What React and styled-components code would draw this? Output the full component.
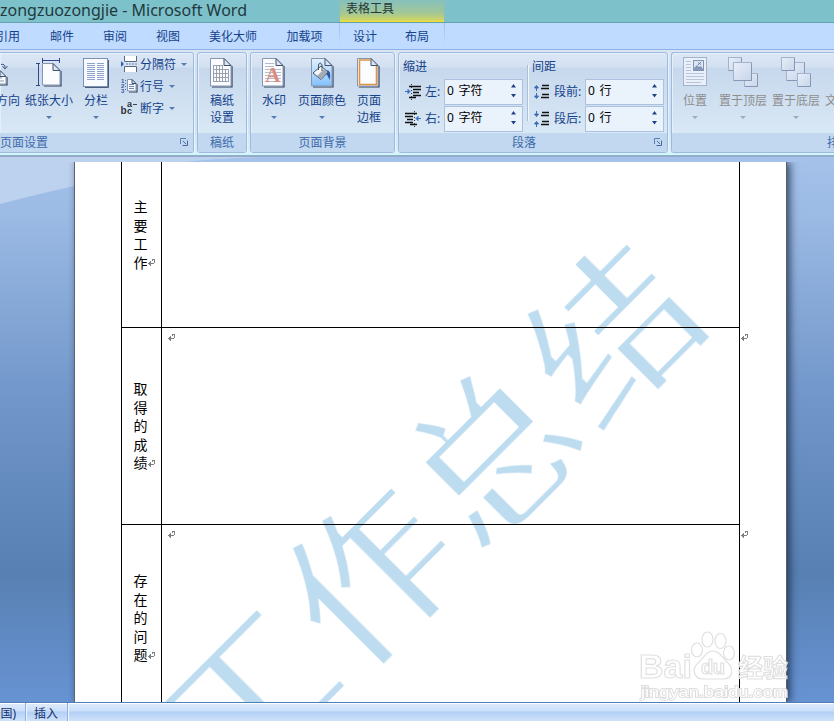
import React from 'react';
import styled, { createGlobalStyle, css } from 'styled-components';

const GlobalStyle = createGlobalStyle`
  * {
    box-sizing: border-box;
  }
  body {
    margin: 0;
    overflow: hidden;
    font-family: 'Noto Sans', 'Noto Sans CJK SC', sans-serif;
    font-size: 12px;
    color: #15428b;
  }
  svg {
    display: block;
  }
`;

const Window = styled.div`
  display: flex;
  flex-direction: column;
  width: 834px;
  height: 721px;
  overflow: hidden;
`;
const TitleBar = styled.header`
  display: flex;
  height: 23px;
  background: #7dc1cb;
  border-bottom: 1px solid #66a3af;
`;
const Title = styled.div`
  width: 339px;
  font-family: 'Noto Sans', sans-serif;
  font-size: 16px;
  line-height: 21px;
  color: #22393e;
  white-space: nowrap;
`;
const ContextTitle = styled.div`
  width: 106px;
  height: 22px;
  padding-left: 6px;
  line-height: 17px;
  color: #24393b;
  background: linear-gradient(#86c1bc, #a3c796 60%, #cfd467 90%, #f0e02c);
  border-left: 1px solid #8fbfb4;
  border-right: 1px solid #8fbfb4;
`;
const Tabs = styled.nav`
  display: flex;
  height: 27px;
  background: #bfdbff;
  border-bottom: 1px solid #8db2e3;
`;
const Tab = styled.div`
  display: flex;
  justify-content: ${(props) => props.$align || 'center'};
  width: ${(props) => props.$width}px;
  padding-left: ${(props) => props.$left || 0}px;
  line-height: 27px;
  white-space: nowrap;
  ${(props) =>
    props.$edge &&
    css`
      border-right: 1px solid;
      border-image: linear-gradient(#9fc0dd, #bfdbff 85%) 1;
    `}
`;
const Ribbon = styled.section`
  display: flex;
  gap: 3px;
  height: 107px;
  padding-top: 2px;
  background: linear-gradient(#dbe6f4, #d2e0f2 20%, #cfe1f5 70%, #d9f1fb 98%);
  border-bottom: 2px solid #96abc8;
  box-shadow: inset 0 -1px #c9fbff;
`;
const Group = styled.div`
  display: flex;
  flex-direction: column;
  flex: none;
  width: ${(props) => props.$width}px;
  height: 101px;
  overflow: hidden;
  border: 1px solid #9ebbdb;
  border-radius: 3px;
  box-shadow: inset 1px 1px #e6eef8, 1px 0 #e9f3fc;
  background: linear-gradient(
    #dce7f5 0,
    #d3e0f1 14px,
    #c7d8ed 15px,
    #d8e8f5 80px
  );
  ${(props) => props.$cut === 'left' && 'border-left: 0; border-radius: 0 3px 3px 0;'}
  ${(props) => props.$cut === 'right' && 'border-right: 0; border-radius: 3px 0 0 3px;'}
`;
const GroupBody = styled.div`
  display: flex;
  height: 80px;
  padding: 4px 0 0 ${(props) => props.$left}px;
`;
const GroupTitle = styled.div`
  display: flex;
  align-items: center;
  height: 19px;
  padding: 0 ${(props) => props.$right || 0}px 2px ${(props) => props.$left || 0}px;
  color: #3e6aaa;
  background: #c1d8f0;
  white-space: nowrap;
`;
const TitleText = styled.span`
  flex: 1;
  padding-right: ${(props) => props.$pad || 0}px;
  text-align: ${(props) => props.$align || 'center'};
`;
const BigButton = styled.div`
  display: flex;
  flex-direction: column;
  flex: none;
  align-items: center;
  width: ${(props) => props.$width}px;
  margin-left: ${(props) => props.$gap || 0}px;
  line-height: 17px;
  white-space: nowrap;
  color: ${(props) => (props.$disabled ? '#8d8d8d' : '#15428b')};
`;
const IconBox = styled.div`
  display: flex;
  justify-content: center;
  height: 35px;
`;
const Caret = styled.i`
  width: 0;
  height: 0;
  margin: ${(props) => (props.$inline ? '1px 0 0 5px' : '7px 0 0')};
  border: 3px solid transparent;
  border-top-color: ${(props) => (props.$disabled ? '#a5a9b0' : '#567db1')};
  border-bottom: 0;
`;
const SmallList = styled.div`
  display: flex;
  flex-direction: column;
  margin-left: 7px;
`;
const SmallButton = styled.div`
  display: flex;
  align-items: center;
  height: 22px;
  margin-top: ${(props) => props.$top || 0}px;
  white-space: nowrap;
`;
const SmallIcon = styled.div`
  width: 19px;
`;
const Column = styled.div`
  width: ${(props) => props.$width}px;
  flex: none;
`;
const ColumnTitle = styled.div`
  height: 21px;
  line-height: 19px;
`;
const Field = styled.div`
  display: flex;
  align-items: center;
  height: 27px;
`;
const FieldIcon = styled.div`
  width: ${(props) => props.$width}px;
  padding-left: 2px;
`;
const FieldLabel = styled.span`
  width: ${(props) => props.$width}px;
  padding-bottom: 1px;
  white-space: nowrap;
`;
const Spinner = styled.div`
  display: flex;
  align-items: center;
  justify-content: space-between;
  width: 79px;
  height: 26px;
  padding: 0 5px 3px 2px;
  color: #000;
  word-spacing: 1.5px;
  background: #eaf2fb;
  border: 1px solid #abc1de;
`;
const Divider = styled.div`
  width: 2px;
  height: 56px;
  margin: 8px 3px 0 4px;
  background: #f0f6fc;
  border-left: 1px solid #a9bfdc;
`;
const Workspace = styled.main`
  display: flex;
  position: relative;
  height: 545px;
  padding: 5px 0 0 74px;
  overflow: hidden;
  background: linear-gradient(
    #a4c2ea 0,
    #9bbae4 60px,
    #7398cb 230px,
    #5880b2 415px,
    #6793d3 545px
  );
`;
const Swoosh = styled.svg`
  position: absolute;
  left: 0;
  top: 0;
`;
const Page = styled.article`
  position: relative;
  width: 713px;
  height: 540px;
  overflow: hidden;
  background: #fff;
  border-left: 1px solid #5c6470;
  border-right: 1px solid #56606c;
`;
const PageShadow = styled.div`
  position: relative;
  display: flex;
  clip-path: inset(0 -14px 0 -6px);
  box-shadow: 3px 0 8px rgba(20, 35, 60, 0.75);
`;
const Watermark = styled.svg`
  position: absolute;
  left: 0;
  top: 0;
  font-family: 'Noto Sans CJK SC', sans-serif;
`;
const Table = styled.div`
  position: relative;
  display: grid;
  grid-template-columns: 41px 578px 40px;
  grid-template-rows: 165px 197px 178px;
  margin-left: 46px;
`;
const HeadCell = styled.div`
  padding-top: ${(props) => props.$top}px;
  padding-left: 11.5px;
  border-left: 1px solid #000;
  border-right: 1px solid #000;
  border-top: ${(props) => (props.$line ? '1px solid #000' : '0')};
  font-family: 'Noto Sans CJK SC', sans-serif;
  font-size: 14px;
  line-height: 18.6px;
  color: #000;
`;
const Char = styled.div`
  display: flex;
  align-items: center;
  height: 18.6px;
`;
const BodyCell = styled.div`
  padding: 5px 0 0 6px;
  border-right: 1px solid #000;
  border-top: ${(props) => (props.$line ? '1px solid #000' : '0')};
`;
const OutCell = styled.div`
  padding: 6px 0 0 1px;
`;
const SiteMark = styled.svg`
  position: absolute;
  left: 636px;
  top: 468px;
`;
const StatusBar = styled.footer`
  display: flex;
  height: 19px;
  border-top: 1px solid #4f7db5;
  box-shadow: inset 0 1px #fff;
  background: linear-gradient(#dfebfc 0, #cbdff9 8px, #b2cff5 9px, #d3e4fb 19px);
`;
const StatusItem = styled.div`
  display: flex;
  justify-content: flex-end;
  width: ${(props) => props.$width}px;
  padding-right: 9px;
  line-height: 21px;
  border-right: 1px solid #8fb0dc;
  box-shadow: 1px 0 #eef5ff;
  white-space: nowrap;
  color: #15306b;
`;

function Sheet({ x = 0, y = 0, w = 21, h = 28, fill = '#fbfcff', fold = 7 }) {
  return (
    <g transform={`translate(${x} ${y})`}>
      <path d={`M2 ${h + 1}H${w + 1}V${fold + 1}`} fill="none" stroke="#30405c" strokeWidth="1.2" />
      <path
        d={`M.5 .5H${w - fold}L${w} ${fold + 0.5}V${h}H.5Z`}
        fill={fill}
        stroke="#8795ae"
      />
      <path d={`M${w - fold} .5V${fold + 0.5}H${w}Z`} fill="#dce4f2" stroke="#41516d" />
    </g>
  );
}

function DirectionIcon() {
  return (
    <svg width="34" height="32">
      <Sheet x={13} y={13} w={14} h={14} fold={6} />
      <path d="M16 21h7M16 24h9" stroke="#8797b4" />
      <path d="M22 7.500q4 -1 4 3M23.500 9l2.500 3 2.500-3" fill="none" stroke="#39527f" />
    </svg>
  );
}

function PaperSizeIcon() {
  return (
    <svg width="26" height="32">
      <path
        d="M6 3.500H24M6.500 1V6M23.500 1V6M2.500 6V28M0 6.500H4M0 28.500H4"
        stroke="#33488c"
        fill="none"
      />
      <Sheet x={6} y={6} w={18} h={22} fold={7} />
    </svg>
  );
}

function ColumnsIcon() {
  return (
    <svg width="26" height="32">
      <path d="M2 30.500H25.500V3" stroke="#4b5d7d" fill="none" />
      <rect x=".5" y="1.500" width="24" height="28" fill="#f8fbff" stroke="#7c90b3" />
      {Array.from({ length: 9 }, (_, i) => (
        <path key={i} d={`M4 ${6.5 + i * 2}H12M14 ${6.5 + i * 2}H21`} stroke="#8fa3ca" />
      ))}
    </svg>
  );
}

function BreaksIcon() {
  return (
    <svg width="17" height="16">
      <path d="M3.500 0V5.500H15.500V0M3.500 16V10.500H15.500V16" fill="#fff" stroke="#586a88" />
      <path d="M5 8H17" stroke="#7383a0" strokeDasharray="2 1" />
      <path d="M0 5L3 8 0 11Z" fill="#2f5db0" />
    </svg>
  );
}

function LineNumbersIcon() {
  return (
    <svg width="17" height="16">
      <g fill="#3459a0" fontSize="6" fontFamily="Liberation Sans, sans-serif" fontWeight="bold">
        <text x="0" y="5">1</text>
        <text x="0" y="10">2</text>
        <text x="0" y="15">3</text>
      </g>
      <path d="M4.500 2v11" stroke="#5470a0" strokeDasharray="1 2" />
      <Sheet x={6} y={1} w={9} h={12} fold={4} />
      <path d="M8 6.500h5M8 8.500h5M8 10.500h5" stroke="#7189b5" />
    </svg>
  );
}

function HyphenIcon() {
  return (
    <svg width="17" height="16" fill="#333" fontFamily="Liberation Sans, sans-serif" fontWeight="bold">
      <text x="-0.500" y="14" fontSize="10">b</text>
      <text x="6" y="14" fontSize="9">c</text>
      <text x="6" y="7" fontSize="9">a</text>
      <path d="M12 4.500h4" stroke="#444" />
    </svg>
  );
}

function GridPaperIcon() {
  return (
    <svg width="24" height="32">
      <Sheet x={0} y={1} />
      <path
        d="M3 8.500H13M3 12.500H19M3 16.500H19M3 20.500H19M3 24.500H19M3.500 8V25M6.500 8V25M9.500 8V25M12.500 8V25M15.500 12V25M18.500 12V25"
        stroke="#9aa1ac"
        fill="none"
      />
    </svg>
  );
}

function WatermarkIcon() {
  return (
    <svg width="24" height="32">
      <Sheet x={0} y={1} />
      <path
        d="M3 6.500H12M3 9.500H12M3 12.500H19M3 15.500H19M3 18.500H19M3 21.500H19M3 24.500H19"
        stroke="#b6bdca"
      />
      <text
        x="10.800"
        y="25"
        fontSize="21"
        textAnchor="middle"
        fontFamily="Liberation Serif, serif"
        fontWeight="bold"
        fill="#dd8a82"
      >
        A
      </text>
    </svg>
  );
}

function PageColorIcon() {
  return (
    <svg width="24" height="32">
      <defs>
        <linearGradient id="pageBlue" x1="0" y1="0" x2="0" y2="1">
          <stop offset="0" stopColor="#e2f1ff" />
          <stop offset="1" stopColor="#82c1fb" />
        </linearGradient>
      </defs>
      <Sheet x={1} y={1} fill="url(#pageBlue)" />
      <path d="M16 13q6 0 3.500 10q-2-6-5-7Z" fill="#2456a8" />
      <path d="M3 16L11 9 18 15 11 22.500Z" fill="#f4f6f9" stroke="#4c5563" />
      <path d="M11 22L17.500 15 14 12 7 19Z" fill="#a3abb6" />
      <path d="M8.500 13V8q1.500-4 3.500 0v6" fill="none" stroke="#4b5360" />
    </svg>
  );
}

function PageBorderIcon() {
  return (
    <svg width="24" height="32">
      <Sheet x={0} y={1} />
      <path d="M14 3H2.500V27.500H19.500V9" fill="none" stroke="#dc9448" strokeWidth="1.600" />
    </svg>
  );
}

function PositionIcon() {
  return (
    <svg width="24" height="32">
      <rect x=".5" y=".5" width="23" height="28" fill="#e9f0fa" stroke="#a2b2cd" />
      <path
        d="M3 4.500H8M3 7.500H8M3 10.500H8M3 13.500H8M3 16.500H21M3 19.500H21M3 22.500H21M3 25.500H18"
        stroke="#b8c4d9"
      />
      <rect x="10.500" y="3.500" width="10" height="10" fill="#dbe5f3" stroke="#8293b3" />
      <path d="M11 13V11l3-3 2 2 2-1 2 3v1Z" fill="#8799b8" />
      <path d="M18 5l-3 3M15 5.500l3 2" fill="none" stroke="#7184a6" />
    </svg>
  );
}

function Tile({ x, y, s }) {
  return (
    <g>
      <rect x={x + 0.5} y={y + 0.5} width={s} height={s} fill="url(#tile)" stroke="#a4b3cc" />
      <path d={`M${x + 1} ${y + s + 0.5}H${x + s + 0.5}V${y + 1}`} fill="none" stroke="#8797b5" />
    </g>
  );
}

function StackIcon({ tiles }) {
  return (
    <svg width="31" height="32">
      <defs>
        <linearGradient id="tile" x1="0" y1="0" x2="1" y2="1">
          <stop offset="0" stopColor="#e8eff9" />
          <stop offset="1" stopColor="#c7d5ea" />
        </linearGradient>
      </defs>
      {tiles.map(([x, y, s]) => (
        <Tile key={`${x}-${y}`} x={x} y={y} s={s} />
      ))}
    </svg>
  );
}

function IndentIcon({ right }) {
  return (
    <svg width="17" height="16">
      <g transform={right ? 'translate(16 0) scale(-1 1)' : undefined}>
        <path
          d="M4 2.500H16M8 5.500H16M8 8.500H14M8 11.500H16M4 13.500H11"
          stroke="#111"
          strokeWidth="1.500"
        />
        <path d="M6.500 0V16" stroke="#333" strokeDasharray="1 2" />
        <path d="M0 7.500H3M3 5.500L5 7.500 3 9.500Z" fill="#3a6fc4" stroke="#3a6fc4" />
      </g>
    </svg>
  );
}

function SpacingIcon({ after }) {
  const up = 'M2.500 7V3M.5 4L2.500 1.500 4.500 4Z';
  const down = 'M2.500 0V4M.5 3L2.500 5.500 4.500 3Z';
  return (
    <svg width="17" height="16">
      <path d={after ? down : up} fill="#3f6db9" stroke="#3f6db9" />
      <path d={after ? up : down} transform="translate(0 9)" fill="#3f6db9" stroke="#3f6db9" />
      <path
        d="M8 1.500H15M7 4.500H15M8 10.500H15M7 13.500H15"
        stroke="#111"
        strokeWidth="1.400"
      />
    </svg>
  );
}

function SpinArrows() {
  return (
    <svg width="7" height="18" fill="#1d4486">
      <path d="M1 6.500L3.500 3 6 6.500ZM1 13L3.500 16.500 6 13Z" />
    </svg>
  );
}

function Launcher() {
  return (
    <svg width="8" height="8" fill="none" stroke="#5d7fae">
      <path d="M.5 6V.5H6" />
      <path d="M3 3L6 6M7.500 2.500V7.500H2.500" stroke="#47699a" />
    </svg>
  );
}

function ReturnMark() {
  return (
    <svg width="8" height="8" fill="none" stroke="#808080" shapeRendering="crispEdges">
      <path d="M4 1.500H7M6.500 1V5M0 5.500H6M4.500 1V3M1.500 4V7M2.500 3V8" />
    </svg>
  );
}

const tabs = [
  { label: '引用', width: 20, align: 'flex-end' },
  { label: '邮件', width: 84 },
  { label: '审阅', width: 22 },
  { label: '视图', width: 84 },
  { label: '美化大师', width: 46 },
  { label: '加载项', width: 84, left: 14, edge: true },
  { label: '设计', width: 50 },
  { label: '布局', width: 55, edge: true },
];

const rows = [
  { text: '主要工作', top: 35 },
  { text: '取得的成绩', top: 51 },
  { text: '存在的问题', top: 46 },
];

const watermark = [
  { char: '工', x: -316 },
  { char: '作', x: -145 },
  { char: '总', x: 26 },
  { char: '结', x: 197 },
];

function Button({ icon, lines, width, gap, disabled, menu }) {
  return (
    <BigButton $width={width} $gap={gap} $disabled={disabled}>
      <IconBox>{icon}</IconBox>
      {lines.map((line) => (
        <span key={line}>{line}</span>
      ))}
      {menu && <Caret $disabled={disabled} />}
    </BigButton>
  );
}

function NumberField({ icon, label, iconWidth, labelWidth, value }) {
  return (
    <Field>
      <FieldIcon $width={iconWidth}>{icon}</FieldIcon>
      <FieldLabel $width={labelWidth}>{label}</FieldLabel>
      <Spinner>
        {value}
        <SpinArrows />
      </Spinner>
    </Field>
  );
}

function RibbonBar() {
  return (
    <Ribbon>
      <Group $width={194} $cut="left">
        <GroupBody $left={0}>
          <Button icon={<DirectionIcon />} lines={['文字方向']} width={48} gap={-28} />
          <Button icon={<PaperSizeIcon />} lines={['纸张大小']} width={54} gap={2} menu />
          <Button icon={<ColumnsIcon />} lines={['分栏']} width={36} gap={2} menu />
          <SmallList>
            <SmallButton $top={-4}>
              <SmallIcon><BreaksIcon /></SmallIcon>分隔符<Caret $inline />
            </SmallButton>
            <SmallButton>
              <SmallIcon><LineNumbersIcon /></SmallIcon>行号<Caret $inline />
            </SmallButton>
            <SmallButton>
              <SmallIcon><HyphenIcon /></SmallIcon>断字<Caret $inline />
            </SmallButton>
          </SmallList>
        </GroupBody>
        <GroupTitle $right={5}>
          <TitleText $align="left">页面设置</TitleText>
          <Launcher />
        </GroupTitle>
      </Group>

      <Group $width={50}>
        <GroupBody $left={12}>
          <Button icon={<GridPaperIcon />} lines={['稿纸', '设置']} width={24} />
        </GroupBody>
        <GroupTitle><TitleText>稿纸</TitleText></GroupTitle>
      </Group>

      <Group $width={145}>
        <GroupBody $left={11}>
          <Button icon={<WatermarkIcon />} lines={['水印']} width={24} menu />
          <Button icon={<PageColorIcon />} lines={['页面颜色']} width={48} gap={12} menu />
          <Button icon={<PageBorderIcon />} lines={['页面', '边框']} width={24} gap={11} />
        </GroupBody>
        <GroupTitle><TitleText>页面背景</TitleText></GroupTitle>
      </Group>

      <Group $width={270}>
        <GroupBody $left={4}>
          <Column $width={120}>
            <ColumnTitle>缩进</ColumnTitle>
            <NumberField icon={<IndentIcon />} label="左:" iconWidth={22} labelWidth={19} value="0 字符" />
            <NumberField icon={<IndentIcon right />} label="右:" iconWidth={22} labelWidth={19} value="0 字符" />
          </Column>
          <Divider />
          <Column $width={132}>
            <ColumnTitle>间距</ColumnTitle>
            <NumberField icon={<SpacingIcon />} label="段前:" iconWidth={22} labelWidth={31} value="0 行" />
            <NumberField icon={<SpacingIcon after />} label="段后:" iconWidth={22} labelWidth={31} value="0 行" />
          </Column>
        </GroupBody>
        <GroupTitle $right={5}>
          <TitleText $pad={5}>段落</TitleText>
          <Launcher />
        </GroupTitle>
      </Group>

      <Group $width={163} $cut="right">
        <GroupBody $left={11}>
          <Button icon={<PositionIcon />} lines={['位置']} width={24} disabled menu />
          <Button
            icon={<StackIcon tiles={[[0, 0, 13], [16, 16, 13], [5, 5, 18]]} />}
            lines={['置于顶层']}
            width={48}
            gap={12}
            disabled
            menu
          />
          <Button
            icon={<StackIcon tiles={[[5, 5, 18], [0, 0, 13], [16, 16, 13]]} />}
            lines={['置于底层']}
            width={48}
            gap={5}
            disabled
            menu
          />
          <Button icon={null} lines={['文字环绕']} width={48} gap={5} disabled />
        </GroupBody>
        <GroupTitle $left={155}><TitleText $align="left">排列</TitleText></GroupTitle>
      </Group>
    </Ribbon>
  );
}

function BaiduMark() {
  return (
    <SiteMark width="160" height="76" fill="#fff" stroke="#dedede" strokeWidth="1.200">
      <g opacity="0.92" fontFamily="Liberation Sans, Noto Sans CJK SC, sans-serif" fontWeight="bold">
        <text x="3" y="53" fontSize="34" textLength="53">Bai</text>
        <ellipse cx="61" cy="25" rx="5.500" ry="7" />
        <ellipse cx="71.500" cy="14.500" rx="5.500" ry="7.500" />
        <ellipse cx="84.500" cy="16" rx="5.500" ry="7.500" />
        <ellipse cx="93" cy="28" rx="5.500" ry="7" />
        <path d="M77 26C70 26 68 33 62 38C55 44 58 54 67 54H87C97 54 98 44 92 38C86 33 84 26 77 26Z" />
        <text x="65" y="49" fontSize="20" textLength="24">du</text>
        <text x="102" y="52" fontSize="25" textLength="50">经验</text>
        <text
          x="5"
          y="72"
          fontSize="15.500"
          fontWeight="normal"
          textLength="147"
          lengthAdjust="spacingAndGlyphs"
          stroke="#dadada"
          strokeWidth="1.800"
          paintOrder="stroke"
        >
          jingyan.baidu.com
        </text>
      </g>
    </SiteMark>
  );
}

function Document() {
  return (
    <Workspace>
      <Swoosh width="834" height="50">
        <path d="M0 0H260Q130 4 74 29Q30 39 0 47Z" fill="#bdd2ef" />
      </Swoosh>
      <PageShadow>
        <Page>
          <Watermark
            width="711"
            height="540"
            viewBox="75 162 711 540"
            fontSize="165"
            textAnchor="middle"
            fill="#bedcf0"
          >
            <defs>
              {/* thins the horizontal strokes only, for a song-style weight */}
              <filter id="thin" x="-10%" y="-10%" width="120%" height="120%">
                <feMorphology operator="erode" radius="0 3" />
              </filter>
            </defs>
            <g transform="rotate(-45)">
              {watermark.map(({ char, x }) => (
                <text key={char} x={x} y="730" filter="url(#thin)">
                  {char}
                </text>
              ))}
            </g>
          </Watermark>
          <Table>
            {rows.map((row, index) => (
              <React.Fragment key={row.text}>
                <HeadCell $top={row.top} $line={index > 0}>
                  {[...row.text].map((char, i) => (
                    <Char key={i}>
                      {char}
                      {i === row.text.length - 1 && <ReturnMark />}
                    </Char>
                  ))}
                </HeadCell>
                <BodyCell $line={index > 0}>{index > 0 && <ReturnMark />}</BodyCell>
                <OutCell>{index > 0 && <ReturnMark />}</OutCell>
              </React.Fragment>
            ))}
          </Table>
        </Page>
      </PageShadow>
      <BaiduMark />
    </Workspace>
  );
}

function App() {
  return (
    <>
      <GlobalStyle />
      <Window>
        <TitleBar>
          <Title>zongzuozongjie - Microsoft Word</Title>
          <ContextTitle>表格工具</ContextTitle>
        </TitleBar>
        <Tabs>
          {tabs.map((tab) => (
            <Tab
              key={tab.label}
              $width={tab.width}
              $left={tab.left}
              $align={tab.align}
              $edge={tab.edge}
            >
              {tab.label}
            </Tab>
          ))}
        </Tabs>
        <RibbonBar />
        <Document />
        <StatusBar>
          <StatusItem $width={26}>中国)</StatusItem>
          <StatusItem $width={42}>插入</StatusItem>
        </StatusBar>
      </Window>
    </>
  );
}

export default App;
